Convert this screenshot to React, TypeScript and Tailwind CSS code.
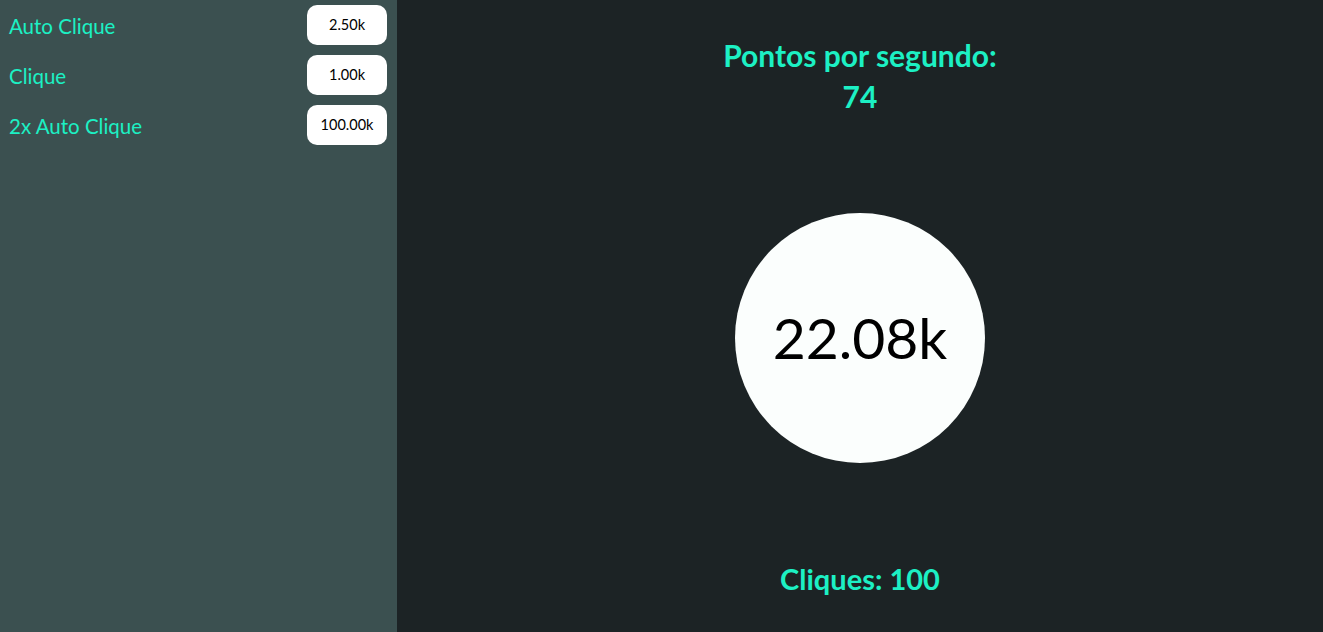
import { useState } from "react";

const UPGRADES = [
  { name: "Auto Clique", cost: "2.50k" },
  { name: "Clique", cost: "1.00k" },
  { name: "2x Auto Clique", cost: "100.00k" },
];

export default function App() {
  const [points] = useState("22.08k");

  return (
    <div
      className="flex h-[632px] w-full overflow-hidden"
      style={{ fontFamily: "Lato, 'Open Sans', sans-serif" }}
    >
      <aside className="w-[397px] shrink-0 bg-[#3b5050] pt-[5px]">
        {UPGRADES.map((u) => (
          <div key={u.name} className="flex h-[50px] items-start justify-between pl-[9px] pr-[10px]">
            <span className="mt-[9px] text-[20.5px] leading-[24px] text-[#1cf0c4]">{u.name}</span>
            <button className="h-[40px] w-[80px] rounded-[10px] bg-white text-[14.5px] text-black">
              {u.cost}
            </button>
          </div>
        ))}
      </aside>

      <main className="flex flex-1 flex-col items-center bg-[#1c2325] text-[#1cf0c4]">
        <div className="mt-[35px] text-center text-[30px] font-bold leading-[41px]">
          <div>Pontos por segundo:</div>
          <div>74</div>
        </div>
        <button className="mt-[96px] flex h-[250px] w-[250px] items-center justify-center rounded-full bg-[#fbfefd] text-[57px] text-black">
          {points}
        </button>
        <div className="mt-[97px] text-[29px] font-bold leading-[38px]">Cliques: 100</div>
      </main>
    </div>
  );
}
